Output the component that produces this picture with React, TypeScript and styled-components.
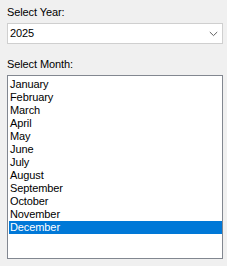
import React, { useState } from "react";
import styled, { createGlobalStyle } from "styled-components";

const Global = createGlobalStyle`
  html, body { margin: 0; padding: 0; background: #f0f0f0; }
  body { font-family: "Liberation Sans", Arial, sans-serif; font-size: 11px; color: #000; }
`;

const Panel = styled.div`
  display: flex;
  flex-direction: column;
  padding: 6px 0 0 7px;
  width: 216px;
`;

const Label = styled.div<{ $top?: number }>`
  line-height: 13px;
  height: 13px;
  margin-top: ${(p) => p.$top ?? 0}px;
  margin-bottom: 4px;
  letter-spacing: -0.1px;
  color: #000;
`;

const Combo = styled.div`
  box-sizing: border-box;
  height: 21px;
  width: 216px;
  background: #fff;
  border: 1px solid #cfcfcf;
  display: flex;
  align-items: center;
  justify-content: space-between;
  padding: 0 4px 0 2px;
  line-height: 13px;
`;

const Value = styled.span`
  letter-spacing: -0.1px;
`;

const ListBox = styled.div`
  box-sizing: border-box;
  height: 184px;
  width: 216px;
  background: #fff;
  border: 1px solid #828790;
  padding: 2px 0 0 1px;
  display: flex;
  flex-direction: column;
`;

const Item = styled.div<{ $selected?: boolean }>`
  height: 13px;
  line-height: 13px;
  padding-left: 1px;
  letter-spacing: -0.1px;
  background: ${(p) => (p.$selected ? "#0078d7" : "transparent")};
  color: ${(p) => (p.$selected ? "#fff" : "#000")};
  cursor: default;
  white-space: nowrap;
`;

const months = [
  "January",
  "February",
  "March",
  "April",
  "May",
  "June",
  "July",
  "August",
  "September",
  "October",
  "November",
  "December",
];

export default function App() {
  const [sel, setSel] = useState(11);
  return (
    <>
      <Global />
      <Panel>
        <Label>Select Year:</Label>
        <Combo>
          <Value>2025</Value>
          <svg width="9" height="6" viewBox="0 0 9 6">
            <path d="M0.8 1 L4.5 4.6 L8.2 1" fill="none" stroke="#606060" strokeWidth="1" />
          </svg>
        </Combo>
        <Label $top={14}>Select Month:</Label>
        <ListBox>
          {months.map((m, i) => (
            <Item key={m} $selected={i === sel} onClick={() => setSel(i)}>
              {m}
            </Item>
          ))}
        </ListBox>
      </Panel>
    </>
  );
}
